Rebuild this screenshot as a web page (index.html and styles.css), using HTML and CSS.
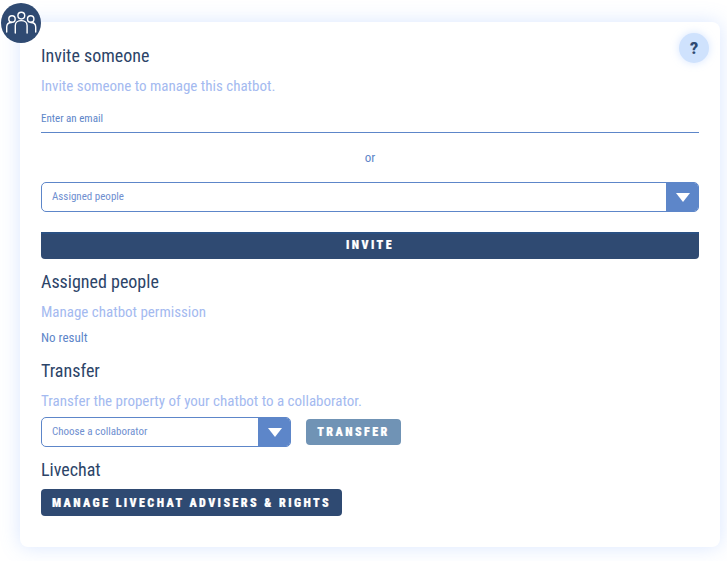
FILE: index.html
```html
<!DOCTYPE html>
<html lang="en">
  <head>
    <meta charset="UTF-8" />
    <title>Collaborators</title>
    <link rel="stylesheet" href="styles.css">
  </head>
  <body>
    <div class="avatar">
      <svg width="40" height="40" viewBox="0 0 40 40" fill="none" stroke="#fff" stroke-width="1.4" stroke-linecap="round">
        <circle cx="20.300" cy="12.600" r="3.400" />
        <circle cx="11" cy="16" r="3.200" />
        <circle cx="29.700" cy="16" r="3.200" />
        <path d="M14.300 30v-7.500c0-6.500 11.800-6.500 11.800 0V30" />
        <path d="M5.700 29v-5c0-3.500 2.500-4.500 5-4.500" />
        <path d="M34.700 29v-5c0-3.500-2.500-4.500-5-4.500" />
      </svg>
    </div>
    <main class="card">
      <button class="help">?</button>
      <section class="invite">
        <h2>Invite someone</h2>
        <p class="desc">Invite someone to manage this chatbot.</p>
        <div class="email">Enter an email</div>
        <p class="or">or</p>
        <div class="select">
          <span>Assigned people</span>
          <i class="arrow"></i>
        </div>
        <button class="btn btn-wide">INVITE</button>
      </section>
      <section class="assigned">
        <h2>Assigned people</h2>
        <p class="desc">Manage chatbot permission</p>
        <p class="empty">No result</p>
      </section>
      <section class="transfer">
        <h2>Transfer</h2>
        <p class="desc">Transfer the property of your chatbot to a collaborator.</p>
        <div class="transfer-row">
          <div class="select select-small">
            <span>Choose a collaborator</span>
            <i class="arrow"></i>
          </div>
          <button class="btn btn-muted">TRANSFER</button>
        </div>
      </section>
      <section class="livechat">
        <h2>Livechat</h2>
        <button class="btn btn-manage">MANAGE LIVECHAT ADVISERS &amp; RIGHTS</button>
      </section>
    </main>
  </body>
</html>
```

FILE: styles.css
```css
* {
  margin: 0;
  padding: 0;
  box-sizing: border-box;
}

body {
  background-color: #fff;
  font-family: "Roboto Condensed", Roboto, sans-serif;
  font-stretch: 75%;
  padding: 22px 7px 14px 20px;
  position: relative;
}

.avatar {
  position: absolute;
  z-index: 1;
  left: 1px;
  top: 3px;
  width: 40px;
  height: 40px;
  border-radius: 50%;
  background-color: #2f4a72;
  display: flex;
  align-items: center;
  justify-content: center;
}

.card {
  position: relative;
  height: 525px;
  padding: 23px 21px 0;
  background-color: #fff;
  border-radius: 8px;
  box-shadow: 0 0 20px rgba(110, 160, 255, 0.26);
}

.help {
  position: absolute;
  right: 11px;
  top: 11px;
  width: 30px;
  height: 30px;
  border: none;
  border-radius: 50%;
  background-color: #cfe2fd;
  box-shadow: 0 0 8px rgba(150, 190, 255, 0.4);
  color: #2f4a72;
  font-family: Roboto, sans-serif;
  font-size: 16px;
  font-weight: 900;
}

h2 {
  font-size: 18px;
  font-weight: 400;
  line-height: 21px;
  color: #2c4468;
}

.desc {
  font-size: 15px;
  line-height: 18px;
  color: #a4baf0;
  margin-top: 11px;
}

.email {
  margin-top: 10px;
  height: 28px;
  padding-top: 7px;
  font-size: 11px;
  line-height: 13px;
  color: #5d86c9;
  border-bottom: 1px solid #5d86c9;
}

.or {
  margin-top: 17px;
  height: 32px;
  text-align: center;
  font-size: 13px;
  line-height: 15px;
  color: #5d86c9;
}

.select {
  display: flex;
  align-items: center;
  justify-content: space-between;
  height: 30px;
  padding-left: 10px;
  border: 1px solid #5d86c9;
  border-radius: 5px;
  font-size: 11px;
  color: #6f8fd0;
  overflow: hidden;
}

.select span {
  padding-bottom: 2px;
}

.arrow {
  display: flex;
  align-items: center;
  justify-content: center;
  width: 33px;
  height: 30px;
  margin-right: -1px;
  background-color: #5d86c9;
}

.arrow::after {
  content: "";
  border-left: 7px solid transparent;
  border-right: 7px solid transparent;
  border-top: 9px solid #fff;
}

.btn {
  border: none;
  border-radius: 4px;
  background-color: #2f4a72;
  color: #fff;
  font-family: "Roboto Condensed", Roboto, sans-serif;
  font-stretch: 75%;
  font-weight: 900;
  font-size: 12px;
  letter-spacing: 2.43px;
  -webkit-text-stroke: 0.2px #fff;
}

.btn-wide {
  display: block;
  width: 100%;
  height: 27px;
  margin-top: 20px;
  padding-bottom: 4px;
  border-top: 2px solid #2a5082;
  border-radius: 0 0 4px 4px;
}

.assigned {
  margin-top: 12px;
}

.assigned .desc {
  margin-top: 11px;
}

.empty {
  margin-top: 9px;
  font-size: 13px;
  line-height: 15px;
  color: #5d86c9;
}

.transfer {
  margin-top: 15px;
}

.transfer-row {
  display: flex;
  align-items: center;
  gap: 15px;
  margin-top: 7px;
}

.select-small {
  width: 250px;
}

.btn-muted {
  width: 95px;
  height: 26px;
  background-color: #7093b5;
}

.livechat {
  margin-top: 12px;
}

.btn-manage {
  display: block;
  width: 301px;
  height: 27px;
  margin-top: 9px;
}
```
